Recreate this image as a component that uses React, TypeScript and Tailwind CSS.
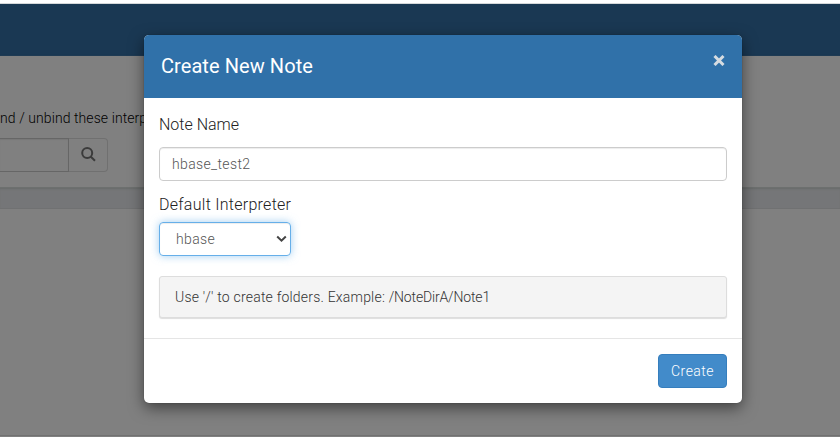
function Backdrop() {
  return (
    <div className="flex h-full flex-col bg-[#808080]">
      <div className="h-[3px] shrink-0 bg-white" />
      <div className="h-px shrink-0 bg-[#d5d8da]" />
      <nav className="h-[52px] shrink-0 bg-[#1a3853]" />
      <section className="flex h-[132px] shrink-0 flex-col border-b border-[#6d706f] shadow-[0_1px_2px_#666968]">
        <p className="mt-[52px] h-5 text-sm leading-5 tracking-[0.08px] whitespace-nowrap text-black">
          nd / unbind these interp
        </p>
        <div className="mt-[10px] flex h-[34px]">
          <div className="w-[69px] border border-l-0 border-[#666] shadow-[inset_0_1px_1px_rgba(0,0,0,0.07)]" />
          <button className="flex w-[39px] items-center justify-center rounded-r border border-l-0 border-[#707070] pb-[2px] text-[#3b3b3b]">
            <svg width="15" height="15" viewBox="0 0 15 15" fill="none" stroke="currentColor" strokeWidth="2">
              <circle cx="6.2" cy="6" r="5" />
              <path d="M9.6 9.5 14 13.8" />
            </svg>
          </button>
        </div>
      </section>
      <div className="h-[21px] shrink-0 border-b border-[#707172] bg-[#757678] shadow-[inset_0_2px_2px_-1px_#686b6a]" />
      <div className="h-[227px] shrink-0 border-b border-[#717171]" />
    </div>
  );
}

export default function App() {
  return (
    <div className="relative h-[437px] w-[840px] overflow-hidden font-['Roboto','Liberation_Sans',sans-serif] font-light">
      <Backdrop />
      <div className="absolute top-[35px] left-[144px] flex h-[368px] w-[598px] flex-col overflow-hidden rounded-[5px] bg-white text-[#212121] shadow-[0_5px_15px_rgba(0,0,0,0.5),0_0_1px_rgba(0,0,0,0.5)]">
        <header className="flex h-[63px] shrink-0 justify-between bg-[#3071a9] px-[17px] text-white">
          <h4 className="mt-[19px] text-xl leading-6 font-normal tracking-[0.07px] whitespace-nowrap">Create New Note</h4>
          <button className="mt-[20px] h-[11px] w-3 text-[#d6dce1]" aria-label="Close">
            <svg width="12" height="11" viewBox="0 0 12 11" stroke="currentColor" strokeWidth="3">
              <path d="m1.5 1 9 9m0-9-9 9" />
            </svg>
          </button>
        </header>
        <main className="flex h-[240px] shrink-0 flex-col items-start px-[15px]">
          <label className="mt-[15px] h-6 text-base leading-6">Note Name</label>
          <input
            className="mt-[10px] h-[34px] w-[568px] rounded border border-[#ccc] px-3 text-sm tracking-[0.36px] text-[#555] shadow-[inset_0_1px_1px_rgba(0,0,0,0.075)] outline-none"
            defaultValue="hbase_test2"
          />
          <label className="mt-3 h-6 text-base leading-6 tracking-[0.27px]">Default Interpreter</label>
          <div className="mt-[5px] flex h-[34px] w-[132px] items-center justify-between rounded border border-[#66afe9] pr-[3px] pl-4 text-sm tracking-[0.36px] text-[#555] shadow-[inset_0_1px_1px_rgba(0,0,0,0.075),0_0_8px_rgba(102,175,233,0.6)]">
            <span>hbase</span>
            <svg width="11" height="8" viewBox="0 0 11 8" fill="none" stroke="#444" strokeWidth="2">
              <path d="m1.2 1.5 4.3 4.2 4.3-4.2" />
            </svg>
          </div>
          <div className="mt-5 flex h-[42px] w-[568px] items-center rounded-[3px] border border-[#ddd] bg-[#f4f4f4] px-[15px] text-sm text-[#333] shadow-[0_1px_1px_#ddd]">
            <p className="whitespace-pre">
              <span className="tracking-[0.2px]">{"Use '/' to create folders. Example: "}</span>
              <span className="tracking-[-0.16px]">/NoteDirA/Note1</span>
            </p>
          </div>
        </main>
        <footer className="flex h-[65px] justify-end border-t border-[#e5e5e5] px-[15px] pt-[15px]">
          <button className="h-[34px] w-[69px] rounded border border-[#357ebd] bg-[#428bca] text-sm tracking-[0.45px] text-white">
            Create
          </button>
        </footer>
      </div>
    </div>
  );
}
